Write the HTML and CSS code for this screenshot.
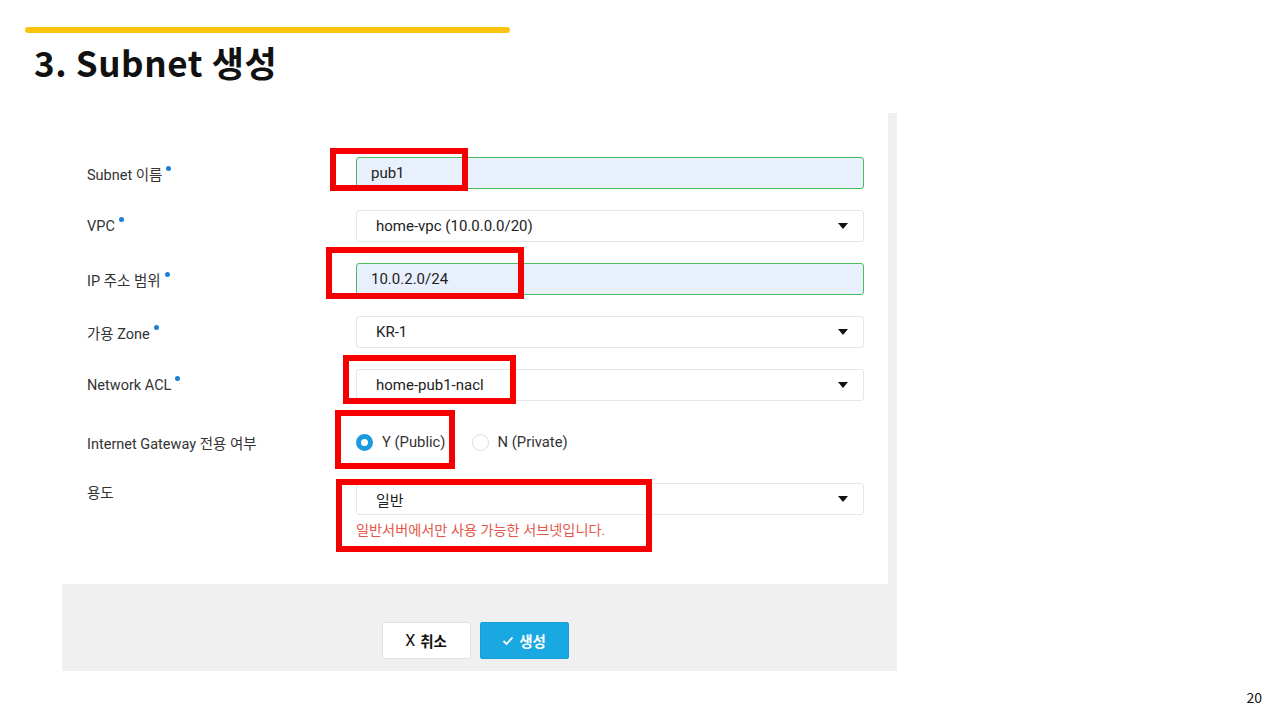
FILE: index.html
```html
<!DOCTYPE html>
<html>
<head>
<meta charset="utf-8">
<title>3. Subnet 생성</title>
<link rel="stylesheet" href="styles.css">
</head>
<body>

<div class="slide">
  <div class="topbar"></div>
  <h1 class="title">3. Subnet 생성</h1>

  <div class="shot">
    <div class="panel">
      <div class="row">
        <div class="label">Subnet 이름<span class="req"></span></div>
        <div class="input filled">pub1</div>
      </div>
      <div class="row">
        <div class="label">VPC<span class="req"></span></div>
        <div class="select">home-vpc (10.0.0.0/20)<span class="caret"></span></div>
      </div>
      <div class="row">
        <div class="label">IP 주소 범위<span class="req"></span></div>
        <div class="input filled">10.0.2.0/24</div>
      </div>
      <div class="row">
        <div class="label">가용 Zone<span class="req"></span></div>
        <div class="select">KR-1<span class="caret"></span></div>
      </div>
      <div class="row">
        <div class="label">Network ACL<span class="req"></span></div>
        <div class="select">home-pub1-nacl<span class="caret"></span></div>
      </div>
      <div class="row tall">
        <div class="label">Internet Gateway 전용 여부</div>
        <div class="radios">
          <label class="radio"><span class="dot on"></span>Y (Public)</label>
          <label class="radio"><span class="dot"></span>N (Private)</label>
        </div>
      </div>
      <div class="row top">
        <div class="label">용도</div>
        <div>
          <div class="select">일반<span class="caret"></span></div>
          <p class="hint">일반서버에서만 사용 가능한 서브넷입니다.</p>
        </div>
      </div>
    </div>
    <div class="actions">
      <button class="btn cancel"><span class="x">X</span> 취소</button>
      <button class="btn ok"><svg width="12" height="10" viewBox="0 0 12 10"><path d="M1.5 5 L4.5 8 L10.5 1.5" fill="none" stroke="#fff" stroke-width="1.8"/></svg> 생성</button>
    </div>

    <!-- annotation boxes -->
    <div class="mark m1"></div>
    <div class="mark m2"></div>
    <div class="mark m3"></div>
    <div class="mark m4"></div>
    <div class="mark m5"></div>
  </div>

  <div class="pagenum">20</div>
</div>

</body>
</html>
```

FILE: styles.css
```css
* {
    box-sizing: border-box;
}
body {
    margin: 0;
    background-color: white;
}
.slide {
    width: 1280px;
    height: 720px;
    display: flex;
    flex-direction: column;
    font-family: "Roboto", "Noto Sans CJK KR", sans-serif;
}
.topbar {
    margin: 27px 0 0 25px;
    width: 485px;
    height: 6px;
    border-radius: 3px;
    background-color: #fbc30c;
}
.title {
    margin: 6px 0 0 34px;
    font-family: "Noto Sans CJK KR", sans-serif;
    font-size: 35px;
    font-weight: 700;
    letter-spacing: 0.6px;
    line-height: 46px;
    color: #111;
}
.shot {
    position: relative;
    margin: 28px 0 0 62px;
    width: 835px;
    height: 558px;
    background-color: #f0f0f0;
}
.panel {
    width: 826px;
    height: 471px;
    background-color: white;
    padding: 44px 0 0 25px;
    display: flex;
    flex-direction: column;
    gap: 21px;
}
.row {
    display: grid;
    grid-template-columns: 269px 508px;
    align-items: center;
    min-height: 32px;
}
.row.tall {
    min-height: 40px;
}
.row.top {
    align-items: start;
}
.row.top .label {
    line-height: 22px;
}
.label {
    font-size: 14.5px;
    color: #333;
}
.req {
    display: inline-block;
    width: 5px;
    height: 5px;
    border-radius: 50%;
    background-color: #1b7fd6;
    margin-left: 4px;
    vertical-align: 9px;
}
.input, .select {
    height: 32px;
    border-radius: 3px;
    font-size: 15px;
    color: #222;
    display: flex;
    align-items: center;
}
.input {
    border: 1px solid #4cbd5e;
    background-color: #e8f0fe;
    padding-left: 14px;
}
.select {
    border: 1px solid #e6e6e6;
    background-color: white;
    padding-left: 19px;
    padding-right: 15px;
    justify-content: space-between;
}
.caret {
    width: 0;
    height: 0;
    border-left: 5px solid transparent;
    border-right: 5px solid transparent;
    border-top: 6px solid #111;
}
.radios {
    display: flex;
    align-items: center;
    gap: 26px;
    height: 38px;
}
.radio {
    display: flex;
    align-items: center;
    gap: 9px;
    font-size: 14.8px;
    color: #333;
}
.dot {
    width: 17px;
    height: 17px;
    border-radius: 50%;
    border: 1px solid #dcdcdc;
    background-color: white;
}
.dot.on {
    border: 5px solid #1a9be0;
}
.hint {
    margin: 4px 0 0 0;
    font-size: 14.2px;
    color: #e4574a;
}
.actions {
    display: flex;
    justify-content: center;
    gap: 9px;
    padding: 38px 9px 0 0;
}
.btn {
    height: 37px;
    width: 89px;
    border-radius: 2px;
    font-family: "Noto Sans CJK KR", sans-serif;
    font-size: 14.5px;
    font-weight: 700;
    display: flex;
    align-items: center;
    justify-content: center;
    gap: 5px;
}
.x {
    font-family: "Roboto", sans-serif;
    font-weight: 400;
    font-size: 16px;
}
.cancel {
    background-color: white;
    border: 1px solid #e2e2e2;
    color: #111;
}
.ok {
    background-color: #19a8e2;
    border: 1px solid #179fd8;
    color: white;
}
.mark {
    position: absolute;
    border: 6px solid #f40000;
}
.m1 { left: 268px; top: 35px; width: 138px; height: 43px; }
.m2 { left: 264px; top: 134px; width: 198px; height: 52px; }
.m3 { left: 281px; top: 242px; width: 173px; height: 49px; }
.m4 { left: 273px; top: 297px; width: 120px; height: 59px; }
.m5 { left: 274px; top: 366px; width: 316px; height: 73px; }
.pagenum {
    margin-top: auto;
    align-self: flex-end;
    padding: 0 18px 13px 0;
    font-family: "Noto Sans CJK KR", sans-serif;
    font-size: 14px;
    color: #111;
}
```
